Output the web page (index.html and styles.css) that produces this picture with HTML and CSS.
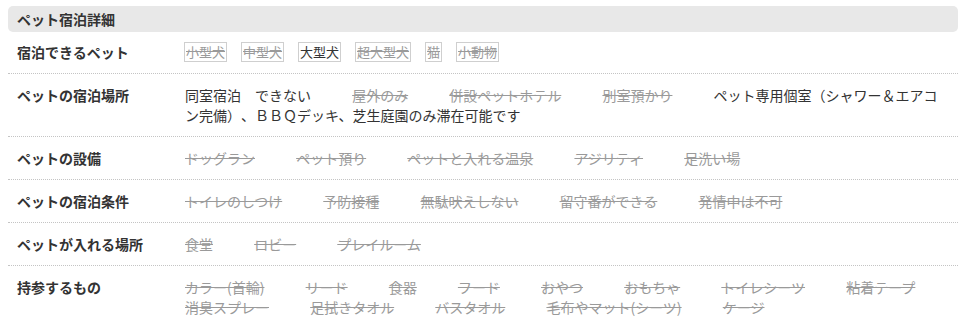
FILE: index.html
```html
<!DOCTYPE html>
<html lang="ja">
<head>
<meta charset="utf-8">
<title>ペット宿泊詳細</title>
<link rel="stylesheet" href="styles.css">
</head>
<body>
<section class="pet">
  <h2 class="pet-title">ペット宿泊詳細</h2>
  <dl class="pet-table">
    <div class="row row-first">
      <dt class="label">宿泊できるペット</dt>
      <dd class="value tags"><span class="tag off">小型犬</span><span class="tag off">中型犬</span><span class="tag on">大型犬</span><span class="tag off">超大型犬</span><span class="tag off">猫</span><span class="tag off">小動物</span></dd>
    </div>
    <div class="row">
      <dt class="label">ペットの宿泊場所</dt>
      <dd class="value"><span class="item on">同室宿泊　できない</span> <span class="item off">屋外のみ</span> <span class="item off">併設ペットホテル</span> <span class="item off">別室預かり</span> <span class="item on">ペット専用個室（シャワー＆エアコン完備）、ＢＢＱデッキ、芝生庭園のみ滞在可能です</span></dd>
    </div>
    <div class="row">
      <dt class="label">ペットの設備</dt>
      <dd class="value"><span class="item off">ドッグラン</span> <span class="item off">ペット預り</span> <span class="item off">ペットと入れる温泉</span> <span class="item off">アジリティ</span> <span class="item off">足洗い場</span></dd>
    </div>
    <div class="row">
      <dt class="label">ペットの宿泊条件</dt>
      <dd class="value"><span class="item off">トイレのしつけ</span> <span class="item off">予防接種</span> <span class="item off">無駄吠えしない</span> <span class="item off">留守番ができる</span> <span class="item off">発情中は不可</span></dd>
    </div>
    <div class="row">
      <dt class="label">ペットが入れる場所</dt>
      <dd class="value"><span class="item off">食堂</span> <span class="item off">ロビー</span> <span class="item off">プレイルーム</span></dd>
    </div>
    <div class="row row-last">
      <dt class="label">持参するもの</dt>
      <dd class="value"><span class="item off">カラー(首輪)</span> <span class="item off">リード</span> <span class="item off">食器</span> <span class="item off">フード</span> <span class="item off">おやつ</span> <span class="item off">おもちゃ</span> <span class="item off">トイレシーツ</span> <span class="item off">粘着テープ</span> <span class="item off">消臭スプレー</span> <span class="item off">足拭きタオル</span> <span class="item off">バスタオル</span> <span class="item off">毛布やマット(シーツ)</span> <span class="item off">ケージ</span></dd>
    </div>
  </dl>
</section>
</body>
</html>
```
FILE: styles.css
```css
html, body {
  background: #ffffff;
}
body {
  margin: 6px 16px 0 8px;
  font-family: "Noto Sans CJK JP", "Noto Sans", sans-serif;
  font-size: 14px;
  line-height: 20px;
  color: #333333;
  text-spacing-trim: space-all;
}
.pet-title {
  margin: 0;
  height: 26px;
  padding: 3px 9px 0;
  box-sizing: border-box;
  background: #e8e8e8;
  border-radius: 5px;
  font-size: 14px;
  line-height: 20px;
  font-weight: bold;
  color: #333333;
}
.pet-table {
  margin: 0;
}
.row {
  display: grid;
  grid-template-columns: 177px 1fr;
  padding: 11px 0;
  border-bottom: 1px dotted #c4c4c4;
}
.row-first {
  padding: 10px 0 11px;
}
.row-last {
  border-bottom: none;
}
.label {
  margin: 0;
  padding-left: 9px;
  font-weight: bold;
  color: #333333;
}
.value {
  margin: 0;
  padding-right: 12px;
  word-spacing: 38px;
}
.item {
  word-spacing: normal;
}
.on {
  color: #333333;
}
.off {
  color: #9a9a9a;
  text-decoration: line-through;
}
.tags {
  word-spacing: normal;
}
.tag {
  display: inline-block;
  vertical-align: top;
  font-size: 13px;
  line-height: 18px;
  padding: 0 1px;
  border: 1px solid #cfcfcf;
  margin-right: 14px;
}
.tag:first-child {
  margin-left: -1px;
}
```
